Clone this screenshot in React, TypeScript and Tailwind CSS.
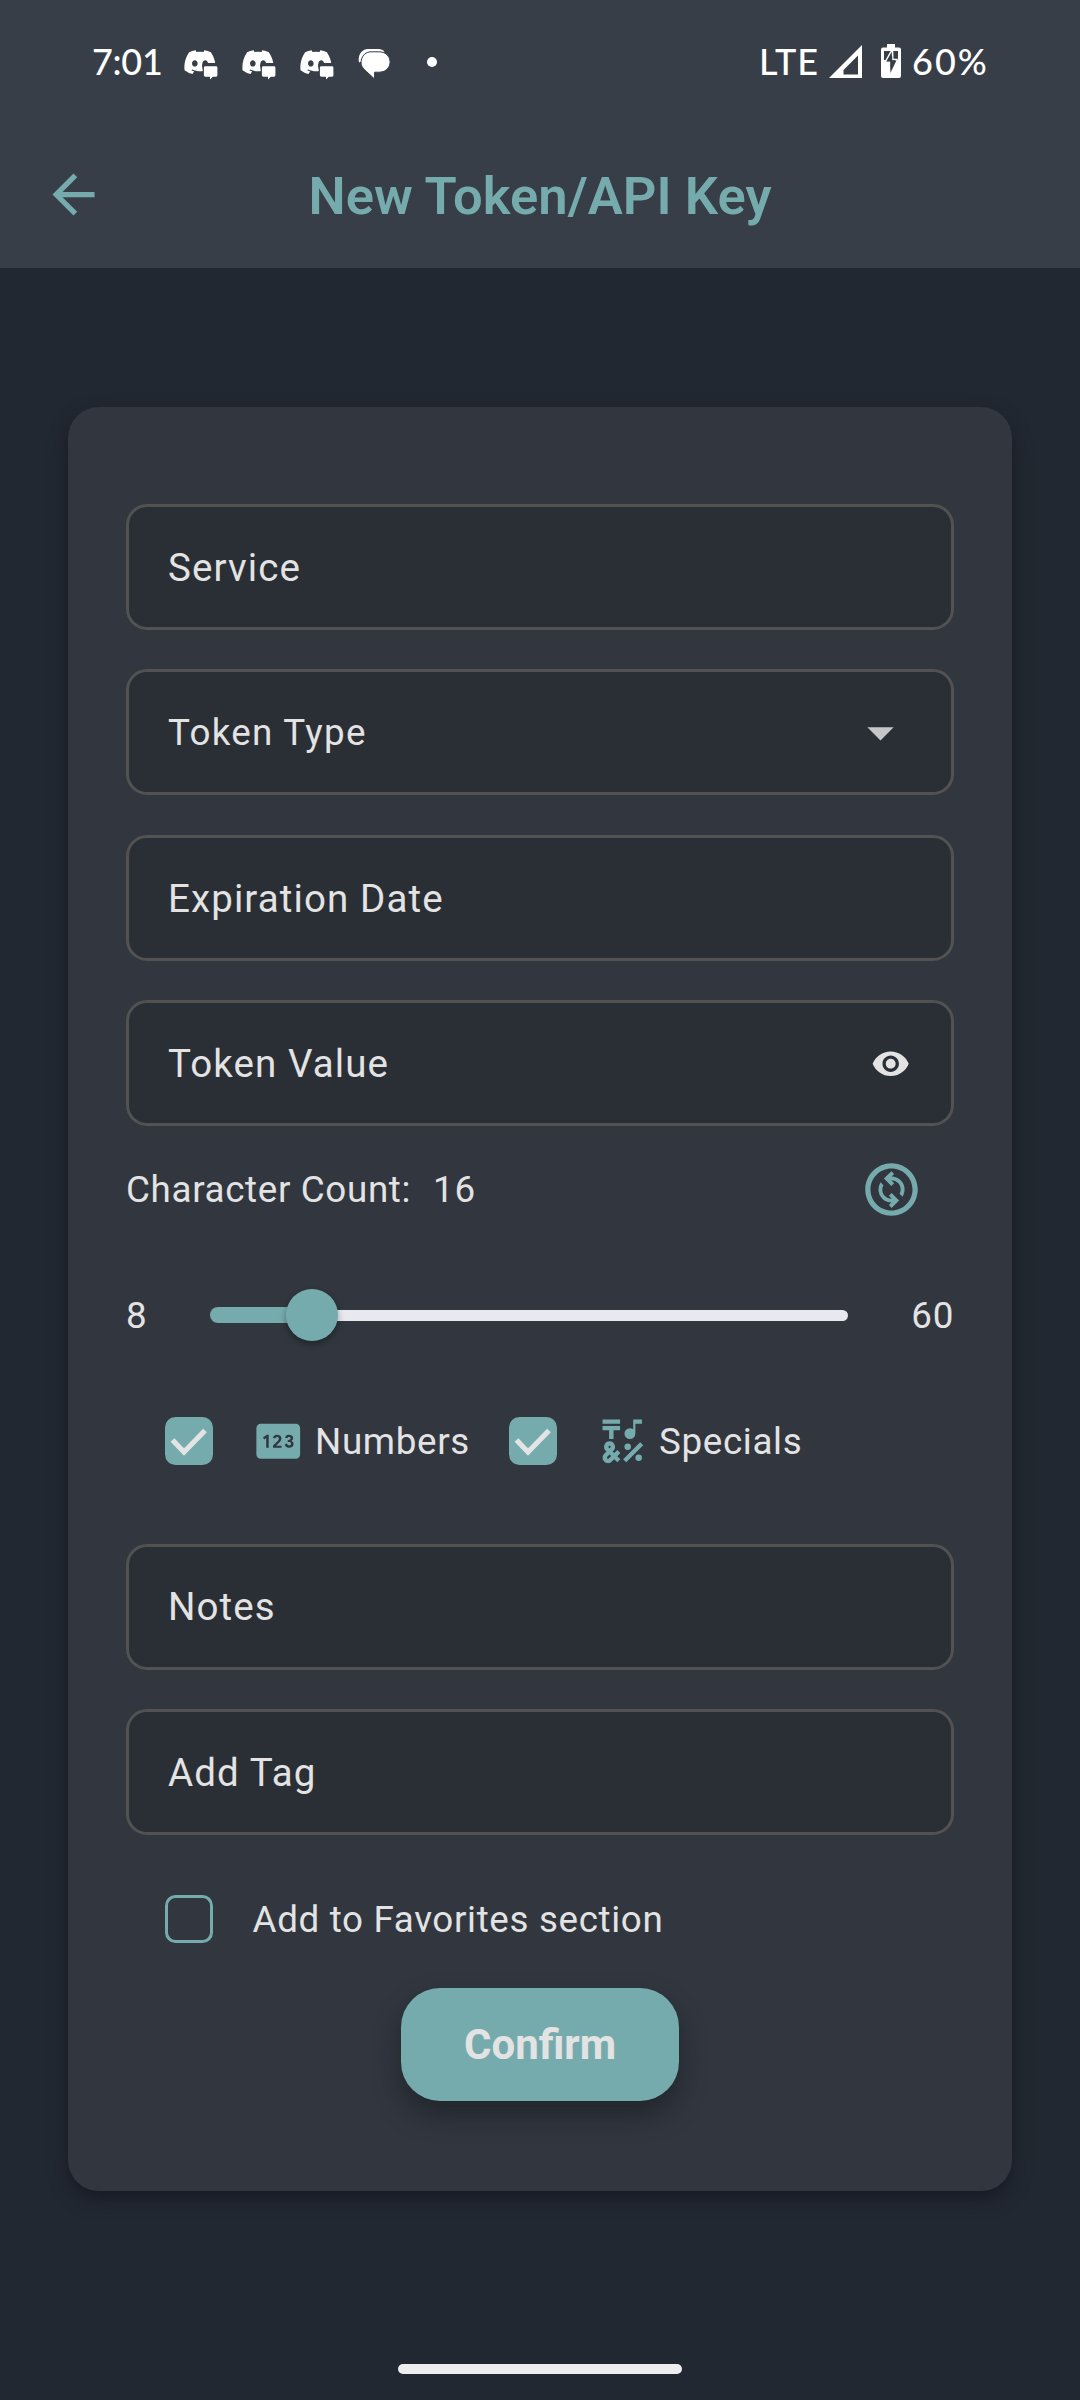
import React from "react";
import {
  MdArrowBack,
  MdArrowDropDown,
  MdEmojiSymbols,
  MdOutlineChangeCircle,
  MdPin,
  MdVisibility,
} from "react-icons/md";
import { FaDiscord } from "react-icons/fa";

function DiscordNotification() {
  return (
    <svg className="h-[30px] w-[35px]" viewBox="0 0 35 30">
      <FaDiscord x="0" y="-4.8" size={34} fill="#fff" color="#fff" />
      <path d="M19 15.500q0-2.500 2.500-2.500H35V30H21Z" fill="#383e47" />
      <path
        d="M22.3 16.300H33a1.400 1.400 0 0 1 1.400 1.400v7.600A1.400 1.400 0 0 1 33 26.700h-3.200l-2.800 2.800v-2.800h-4.700a1.400 1.400 0 0 1-1.400-1.400v-7.600A1.400 1.400 0 0 1 22.300 16.300Z"
        fill="#fff"
      />
    </svg>
  );
}

function MessagesIcon() {
  return (
    <svg className="h-[31px] w-[33px]" viewBox="0 0 33 31">
      <path d="M1 14.500C-.6 7 4 1 10 1h10.500c2.600 0 4.600 1 6 2.400" fill="#fff" />
      <path
        d="M12 3.800h10a10.200 10.200 0 0 1 0 20.400h-5.400V31L6 21.300A10.400 10.400 0 0 1 12 3.800Z"
        fill="#fff"
        stroke="#383e47"
        strokeWidth="1"
      />
    </svg>
  );
}

function SignalIcon() {
  return (
    <svg className="h-[33px] w-[33px]" viewBox="0 0 33 33">
      <path d="M33 0v33H0ZM29 10.500 14.500 25v4.500H29Z" fill="#fff" fillRule="evenodd" />
    </svg>
  );
}

function BatteryIcon() {
  return (
    <svg className="h-[34px] w-[20px]" viewBox="0 0 20 34">
      <path
        d="M6 0h8v3.400h4a2 2 0 0 1 2 2V32a2 2 0 0 1-2 2H2a2 2 0 0 1-2-2V5.400a2 2 0 0 1 2-2h4Z"
        fill="#fff"
      />
      <path d="M3 7h14v9H3Z" fill="#383e47" />
      <path d="M11.500 5 4.200 18h4.500v11L15.800 15.500h-4Z" fill="#383e47" stroke="#fff" strokeWidth="1.500" />
      <path d="M5.200 17.500h4.200V29l6-12.500h-4.200V12Z" fill="#383e47" />
    </svg>
  );
}

function StatusBar() {
  return (
    <div className="flex h-[122px] items-center pl-[92px] pr-[92px] font-['Lato',sans-serif] text-[36px] leading-none text-white">
      <span className="w-[68px] whitespace-nowrap font-medium tracking-[-0.300px]">7:01</span>
      <div className="ml-[23px] mt-[7px] flex gap-[23px]">
        <DiscordNotification />
        <DiscordNotification />
        <DiscordNotification />
      </div>
      <div className="ml-[24px] mt-[5px]">
        <MessagesIcon />
      </div>
      <div className="ml-[36px] mt-[2px] size-[10px] rounded-full bg-white" />
      <div className="ml-auto flex items-center">
        <span className="w-[58px] whitespace-nowrap font-medium tracking-[0.900px]">LTE</span>
        <div className="ml-[12px] mt-[1px]">
          <SignalIcon />
        </div>
        <div className="ml-[19px]">
          <BatteryIcon />
        </div>
        <span className="ml-[11px] w-[76px] whitespace-nowrap font-medium tracking-[2px]">60%</span>
      </div>
    </div>
  );
}

function Field({ label, large, children }: { label: string; large?: boolean; children?: React.ReactNode }) {
  return (
    <div className="flex h-[126px] shrink-0 items-center justify-between rounded-[21px] border-[3px] border-[#525252] bg-[#2a2e35] pl-[39px]">
      <span
        className={
          large ? "pt-[2px] text-[38.500px] tracking-[1.100px]" : "pt-[2px] text-[36.750px] tracking-[1.300px]"
        }
      >
        {label}
      </span>
      {children}
    </div>
  );
}

function Checkbox({ checked }: { checked?: boolean }) {
  return checked ? (
    <div className="flex size-[47.500px] items-center justify-center rounded-[10.500px] bg-[#76abae]">
      <svg className="size-[47px]" viewBox="0 0 47 47" fill="none">
        <path d="M7.500 22 19 34 40 12.500" stroke="#e4e4e4" strokeWidth="5.200" />
      </svg>
    </div>
  ) : (
    <div className="size-[47.500px] rounded-[10.500px] border-[3px] border-[#76abae]" />
  );
}

export default function App() {
  return (
    <div className="flex h-[2400px] w-[1080px] flex-col overflow-hidden bg-[#222831] font-['Roboto',sans-serif] text-[36.750px] leading-none tracking-[0.660px] text-[#e3e3e3]">
      <header className="h-[268px] shrink-0 bg-[#383e47] tracking-normal">
        <StatusBar />
        <div className="flex h-[145px] items-center px-[42px] text-[#76abae]">
          <MdArrowBack size={63} />
          <h1 className="flex-1 pr-[63px] pt-[3px] text-center text-[52.500px] font-semibold tracking-[0.060px]">
            New Token/API Key
          </h1>
        </div>
      </header>

      <main className="mx-[68px] mt-[139px] flex h-[1784px] flex-col rounded-[31px] bg-[#31363f] px-[58px] pt-[97px] shadow-[0_8px_18px_rgba(20,20,30,0.65)]">
        <div className="flex flex-col gap-[39.400px]">
          <Field label="Service" large />
          <Field label="Token Type">
            <MdArrowDropDown size={63} className="mr-[39px] text-[#c6c6c8]" />
          </Field>
          <Field label="Expiration Date" large />
          <Field label="Token Value" large>
            <MdVisibility size={39.4} className="mr-[40.500px] mt-[1px]" />
          </Field>
        </div>

        <div className="flex h-[126px] items-center justify-between pr-[31.500px]">
          <div className="flex gap-[22px] pt-[2px]">
            <span>Character Count:</span>
            <span>16</span>
          </div>
          <MdOutlineChangeCircle size={63} className="text-[#76abae]" />
        </div>

        <div className="flex h-[126px] items-center justify-between">
          <span className="w-[84px] pt-[2px]">8</span>
          <div className="relative flex h-[52px] w-[638px] items-center">
            <div className="h-[16px] w-[102px] rounded-l-full bg-[#76abae]" />
            <div className="h-[11px] flex-1 rounded-r-full bg-[#e7e9ef]" />
            <div className="absolute left-[76px] size-[52px] rounded-full bg-[#76abae] shadow-[0_3px_6px_rgba(0,0,0,0.35)]" />
          </div>
          <span className="w-[106px] pt-[2px] text-right">60</span>
        </div>

        <div className="flex h-[126px] items-center pl-[39px]">
          <Checkbox checked />
          <MdPin size={52.5} className="ml-[39px] text-[#76abae]" />
          <span className="ml-[11px] w-[194px] pt-[2px]">Numbers</span>
          <Checkbox checked />
          <MdEmojiSymbols size={52.5} className="ml-[39px] text-[#76abae]" />
          <span className="ml-[11px] pt-[2px]">Specials</span>
        </div>

        <div className="mt-[39.400px] flex flex-col gap-[39.400px]">
          <Field label="Notes" large />
          <Field label="Add Tag" large />
        </div>

        <div className="mt-[21px] flex h-[126px] items-center gap-[40px] pl-[39px]">
          <Checkbox />
          <span className="pt-[2px]">Add to Favorites section</span>
        </div>

        <button className="mt-[6px] h-[113px] w-[278px] self-center rounded-[39px] bg-[#76abae] pt-[2px] text-[42px] font-bold tracking-normal shadow-[0_14px_24px_rgba(20,24,28,0.5)]">
          Confirm
        </button>
      </main>

      <div className="mb-[26px] mt-auto h-[10px] w-[284px] self-center rounded-full bg-[#eeeeee]" />
    </div>
  );
}
